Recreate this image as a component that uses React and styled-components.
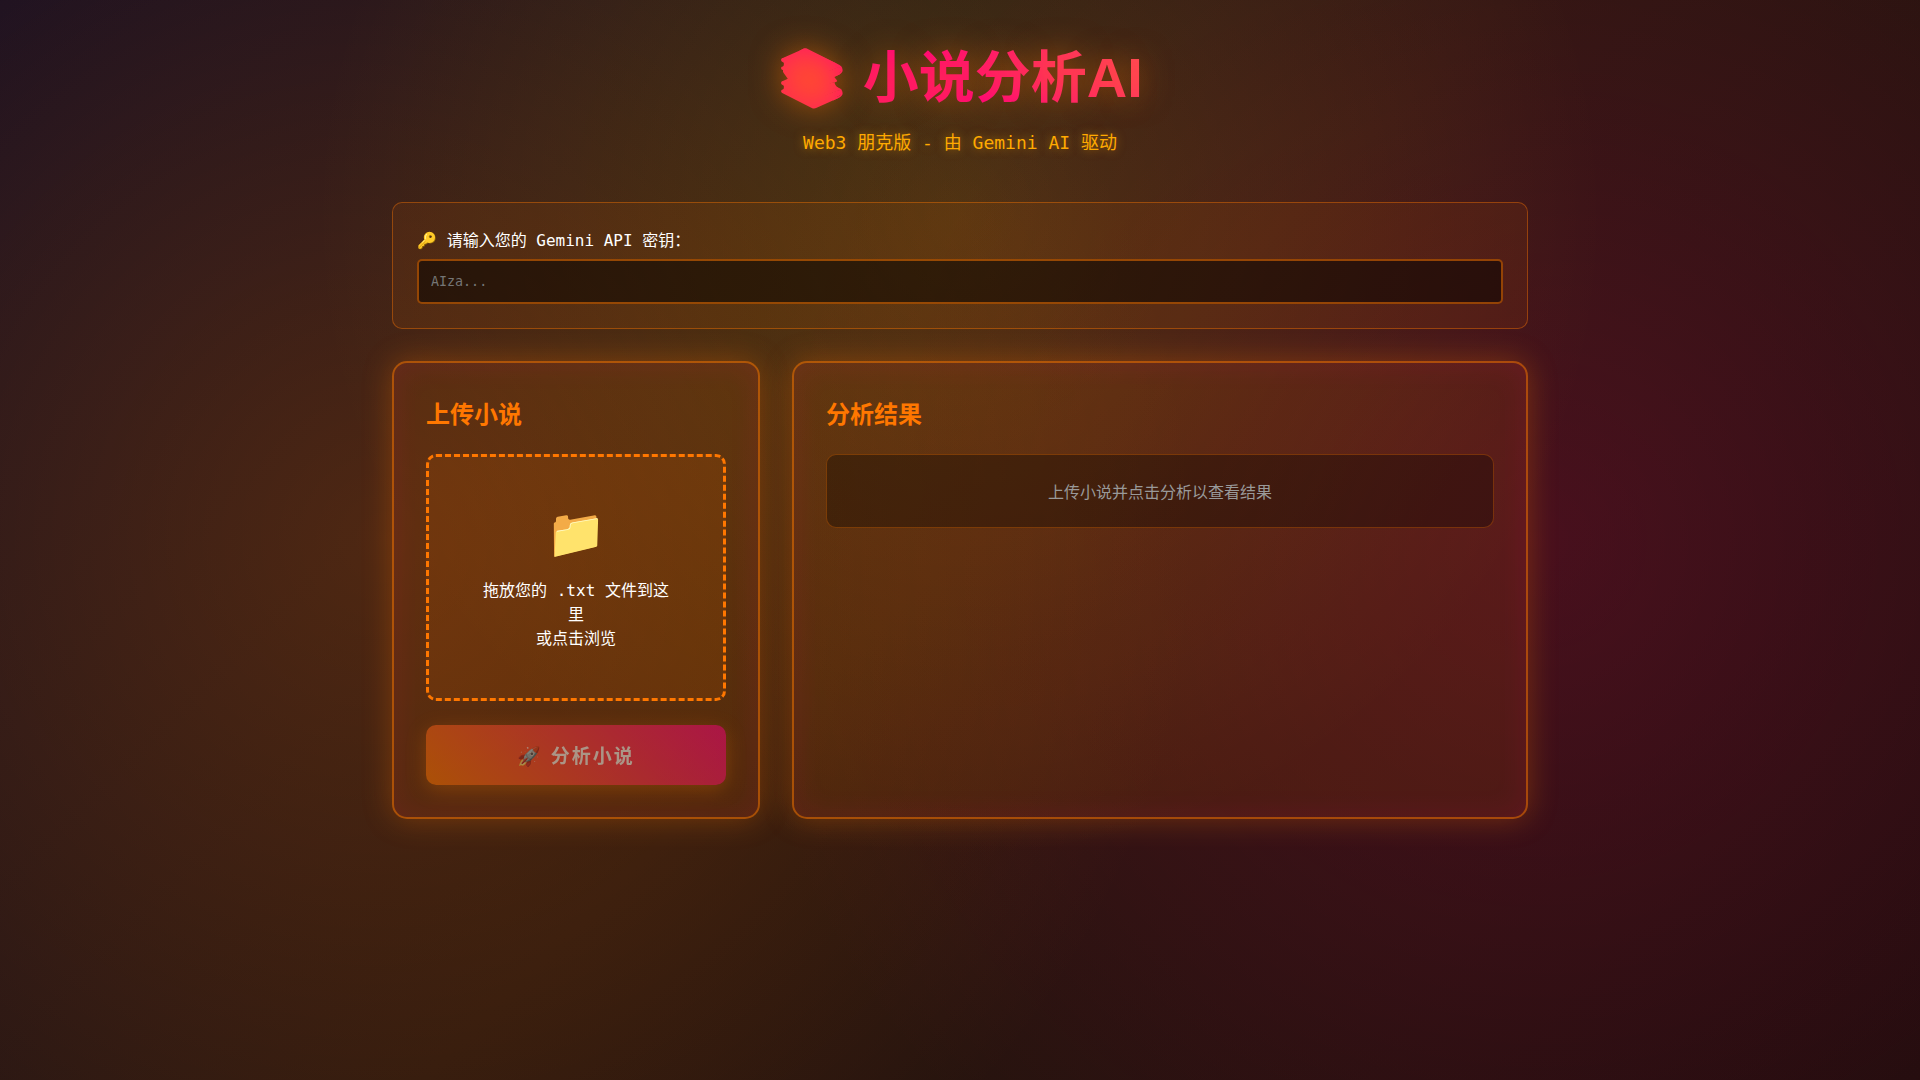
import React from "react";
import styled, { createGlobalStyle } from "styled-components";

const MONO = '"DejaVu Sans Mono", "Noto Sans CJK SC", monospace';
const HEADING = '"Liberation Sans", "Noto Sans CJK SC", sans-serif';

const GlobalStyle = createGlobalStyle`
  * { margin: 0; padding: 0; box-sizing: border-box; }
  body {
    min-height: 100vh;
    color: #fff;
    font-family: ${MONO};
    background:
      radial-gradient(circle at 20% 50%, rgba(255, 119, 0, 0.2) 0%, transparent 50%),
      radial-gradient(circle at 80% 50%, rgba(255, 0, 110, 0.16) 0%, transparent 50%),
      radial-gradient(circle at 50% 20%, rgba(255, 215, 0, 0.15) 0%, transparent 50%),
      linear-gradient(135deg, #180f22 0%, #2a170f 50%, #1f0d0c 100%);
    background-attachment: fixed;
  }
`;

const Container = styled.div`
  max-width: 1200px;
  margin: 0 auto;
  padding: 32px;
`;

const Header = styled.header`
  margin-bottom: 48px;
  text-align: center;
`;

const Title = styled.h1`
  margin-bottom: 8px;
  font-family: ${HEADING};
  font-size: 56px;
  font-weight: 700;
  line-height: 92px;
  background: linear-gradient(45deg, #ff7700, #ff0080, #ffd700);
  background-clip: text;
  -webkit-text-fill-color: transparent;
  text-shadow: 0 0 30px rgba(255, 119, 0, 0.5);
`;

const Subtitle = styled.p`
  font-size: 18px;
  line-height: 22px;
  color: #ffaa00;
  text-shadow: 0 0 10px rgba(255, 170, 0, 0.5);
`;

const KeyPanel = styled.section`
  margin-bottom: 32px;
  padding: 24px;
  border: 1px solid rgba(255, 119, 0, 0.4);
  border-radius: 10px;
  background: rgba(255, 119, 0, 0.08);
`;

const KeyLabel = styled.label`
  display: block;
  margin-bottom: 4px;
  font-size: 16px;
  line-height: 28px;
`;

const KeyInput = styled.input`
  display: block;
  width: 100%;
  height: 45px;
  padding: 12px;
  border: 2px solid rgba(255, 119, 0, 0.5);
  border-radius: 5px;
  outline: none;
  background: rgba(0, 0, 0, 0.5);
  color: #fff;
  font-family: ${MONO};
  &::placeholder { color: #757575; }
`;

const Columns = styled.main`
  display: grid;
  grid-template-columns: 1fr 2fr;
  gap: 32px;
`;

const Card = styled.section`
  padding: 32px;
  border: 2px solid rgba(255, 119, 0, 0.5);
  border-radius: 15px;
  background: rgba(255, 119, 0, 0.1);
  box-shadow: 0 0 30px rgba(255, 119, 0, 0.3), inset 0 0 30px rgba(255, 0, 128, 0.1);
`;

const CardTitle = styled.h2`
  margin-bottom: 19px;
  font-family: ${HEADING};
  font-size: 24px;
  line-height: 40px;
  color: #ff7700;
`;

const DropZone = styled.label`
  display: block;
  margin-bottom: 24px;
  padding: 48px 48px 47px;
  border: 3px dashed #ff7700;
  border-radius: 10px;
  background: rgba(255, 119, 0, 0.1);
  text-align: center;
  font-size: 16px;
  line-height: 24px;
  cursor: pointer;
`;

const HiddenFile = styled.input`
  display: none;
`;

const FolderIcon = styled.span`
  display: block;
  margin-bottom: 18px;
  font-size: 48px;
  line-height: 56px;
`;

const AnalyzeButton = styled.button`
  display: block;
  width: 100%;
  height: 60px;
  padding-bottom: 2px;
  border: none;
  border-radius: 10px;
  background: linear-gradient(45deg, #ff7700, #ff0080);
  box-shadow: 0 5px 20px rgba(255, 119, 0, 0.5);
  color: #fff;
  font-family: ${HEADING};
  font-size: 19px;
  font-weight: 700;
  letter-spacing: 2px;
  opacity: 0.5;
`;

const Result = styled.div`
  padding: 26px 24px 22px;
  border: 1px solid rgba(255, 119, 0, 0.3);
  border-radius: 10px;
  background: rgba(0, 0, 0, 0.3);
  color: #999;
  text-align: center;
  font-size: 16px;
  line-height: 24px;
`;

export default function App() {
  return (
    <>
      <GlobalStyle />
      <Container>
        <Header>
          <Title>📚 小说分析AI</Title>
          <Subtitle>Web3 朋克版 - 由 Gemini AI 驱动</Subtitle>
        </Header>
        <KeyPanel>
          <KeyLabel htmlFor="api-key">🔑 请输入您的 Gemini API 密钥：</KeyLabel>
          <KeyInput id="api-key" type="password" placeholder="AIza..." />
        </KeyPanel>
        <Columns>
          <Card>
            <CardTitle>上传小说</CardTitle>
            <DropZone>
              <FolderIcon>📁</FolderIcon>
              拖放您的 .txt 文件到这里
              <br />
              或点击浏览
              <HiddenFile type="file" accept=".txt" />
            </DropZone>
            <AnalyzeButton type="button" disabled>🚀 分析小说</AnalyzeButton>
          </Card>
          <Card>
            <CardTitle>分析结果</CardTitle>
            <Result>上传小说并点击分析以查看结果</Result>
          </Card>
        </Columns>
      </Container>
    </>
  );
}
